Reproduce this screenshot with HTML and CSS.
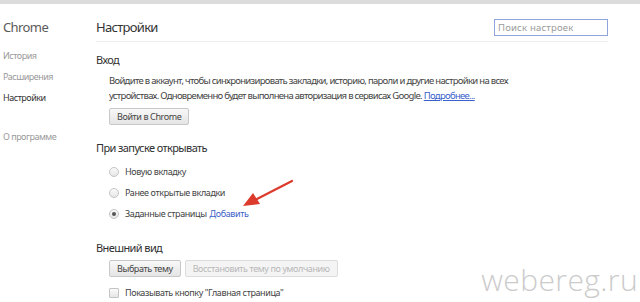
FILE: index.html
```html
<!DOCTYPE html>
<html>

<head>
    <meta charset="utf-8">
    <meta name="viewport" content="width=device-width">
    <title>Настройки</title>
    <link rel="stylesheet" href="styles.css">
</head>

<body>
    <div class="topbar"></div>
    <div class="page">
        <div class="sidebar">
            <div class="brand">Chrome</div>
            <ul class="nav">
                <li class="nav-item">История</li>
                <li class="nav-item">Расширения</li>
                <li class="nav-item active">Настройки</li>
                <li class="nav-item about">О программе</li>
            </ul>
        </div>
        <div class="main">
            <div class="header">
                <h1 class="title">Настройки</h1>
                <input class="search" type="text" placeholder="Поиск настроек">
            </div>

            <div class="section section-login">
                <h2 class="section-title">Вход</h2>
                <div class="section-body">
                    <p class="text">Войдите в аккаунт, чтобы синхронизировать закладки, историю, пароли и другие настройки на всех устройствах. Одновременно будет выполнена авторизация в сервисах Google. <a class="link" href="#">Подробнее...</a></p>
                    <button class="btn btn-login">Войти в Chrome</button>
                </div>
            </div>

            <div class="section section-startup">
                <h2 class="section-title">При запуске открывать</h2>
                <div class="section-body">
                    <label class="option"><span class="radio"></span>Новую вкладку</label>
                    <label class="option"><span class="radio"></span>Ранее открытые вкладки</label>
                    <label class="option"><span class="radio checked"></span>Заданные страницы <a class="plain-link" href="#">Добавить</a></label>
                </div>
            </div>

            <div class="section section-look">
                <h2 class="section-title">Внешний вид</h2>
                <div class="section-body">
                    <div class="btn-row">
                        <button class="btn">Выбрать тему</button>
                        <button class="btn" disabled>Восстановить тему по умолчанию</button>
                    </div>
                    <label class="option option-check"><span class="checkbox"></span>Показывать кнопку "Главная страница"</label>
                </div>
            </div>
        </div>
    </div>

    <svg class="arrow" width="60" height="36" viewBox="0 0 60 36">
        <line x1="54" y1="4" x2="17" y2="23" stroke="#dc3a2c" stroke-width="2.2" stroke-linecap="round"/>
        <polygon points="5,29 15,16 22,27" fill="#dc3a2c"/>
    </svg>
    <div class="watermark">webereg.ru</div>
</body>

</html>
```

FILE: styles.css
```css
body {
    margin: 0;
    font-family: "Noto Sans", "Open Sans", sans-serif;
    font-size: 10px;
    color: #303030;
    background: #fff;
    overflow: hidden;
}

.topbar {
    height: 4px;
    background: #dcdcdc;
}

.page {
    display: flex;
}

.sidebar {
    width: 96px;
    flex-shrink: 0;
}

.brand {
    font-size: 13px;
    line-height: 18px;
    letter-spacing: -0.6px;
    color: #5a5a5a;
    padding: 14px 0 0 3px;
    height: 27px;
}

.nav {
    list-style: none;
    margin: 0;
    padding: 0 0 0 3px;
}

.nav-item {
    font-size: 9px;
    line-height: 21px;
    letter-spacing: -0.5px;
    color: #9a9a9a;
}

.nav-item.active {
    color: #333;
}

.nav-item.about {
    margin-top: 18px;
}

.main {
    flex: 1;
    padding-right: 32px;
}

.header {
    display: flex;
    align-items: flex-start;
    justify-content: space-between;
    height: 37px;
    border-bottom: 1px solid #eee;
}

.title {
    margin: 0;
    padding-top: 14px;
    font-size: 13px;
    line-height: 18px;
    letter-spacing: -0.7px;
    font-weight: normal;
    color: #333;
}

.search {
    width: 106px;
    height: 13px;
    margin-top: 15px;
    padding: 1px 3px;
    border: 1px solid #8fa3dc;
    font-family: inherit;
    font-size: 9.5px;
    letter-spacing: 0.2px;
    color: #333;
    outline: none;
}

.search::placeholder {
    color: #9a9a9a;
}

.section-login {
    margin-top: 8px;
}

.section-startup {
    margin-top: 13px;
}

.section-look {
    margin-top: 14px;
}

.section-title {
    margin: 0;
    font-size: 11px;
    line-height: 20px;
    letter-spacing: -0.6px;
    font-weight: normal;
    color: #303030;
}

.section-body {
    display: flex;
    flex-direction: column;
    align-items: flex-start;
    padding-left: 13px;
}

.text {
    margin: 3px 0 5px;
    font-size: 9.5px;
    line-height: 15px;
    letter-spacing: -0.7px;
    color: #444;
    max-width: 410px;
}

.link {
    color: #3b5fcc;
}

.plain-link {
    color: #3b62c8;
    text-decoration: none;
    margin-left: 3px;
}

.btn {
    display: block;
    font-family: inherit;
    font-size: 9px;
    letter-spacing: -0.4px;
    color: #444;
    height: 17px;
    padding: 0 7px;
    border: 1px solid #c8c8c8;
    border-radius: 2px;
    background: linear-gradient(#f8f8f8, #e5e5e5);
}

.btn:disabled {
    color: #b8b8b8;
    background: #f4f4f4;
    border-color: #dcdcdc;
}

.btn-row {
    display: flex;
    gap: 4px;
    margin-top: 2px;
}

.option {
    display: flex;
    align-items: center;
    height: 21px;
    font-size: 9px;
    letter-spacing: -0.4px;
    color: #444;
}

.section-body > .option:first-child {
    margin-top: 3px;
}

.option-check {
    margin-top: 5px;
}

.radio {
    width: 8px;
    height: 8px;
    border: 1px solid #c4c4c4;
    border-radius: 50%;
    background: linear-gradient(#fafafa, #e6e6e6);
    margin-right: 6px;
    display: flex;
    align-items: center;
    justify-content: center;
}

.radio.checked::after {
    content: "";
    width: 4px;
    height: 4px;
    border-radius: 50%;
    background: #555;
}

.checkbox {
    width: 8px;
    height: 8px;
    border: 1px solid #c4c4c4;
    border-radius: 1px;
    background: linear-gradient(#fafafa, #e6e6e6);
    margin-right: 6px;
}

.arrow {
    position: absolute;
    left: 238px;
    top: 177px;
}

.watermark {
    position: absolute;
    right: 2px;
    top: 262px;
    font-family: "Open Sans", sans-serif;
    font-weight: 300;
    font-size: 30px;
    line-height: 36px;
    letter-spacing: 0.4px;
    color: #cbcbcb;
}
```
